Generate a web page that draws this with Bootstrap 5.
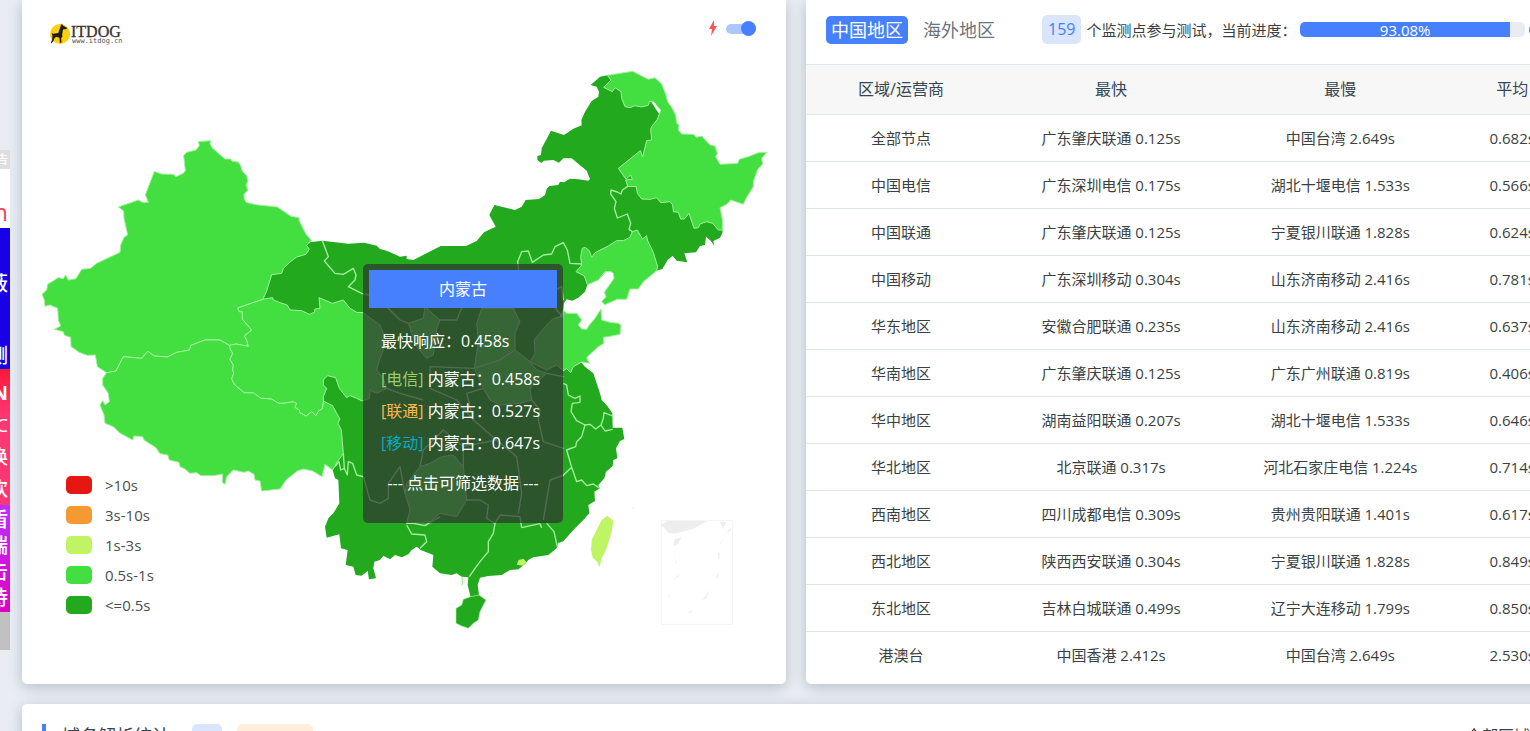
<!DOCTYPE html>
<html lang="zh-CN">
<head>
<meta charset="utf-8">
<meta name="viewport" content="width=device-width, initial-scale=1">
<title>ITDOG 网站测速</title>
<link href="https://cdn.jsdelivr.net/npm/bootstrap@5.3.0/dist/css/bootstrap.min.css" rel="stylesheet">
<style>
  :root { --brand: #4680ff; --fast: #23a91e; --good: #43df40; }
  html, body { overflow: hidden; }
  body { background: #e9edf3; color: #3a3f44; font: 15px/22px "Open Sans", "Noto Sans CJK SC", sans-serif; }

  /* side advertisement, cut by the window edge */
  .ad-strip { width: 10px; margin-top: 150px; color: #fff; }
  .ad-strip div { display: flex; flex-direction: column; align-items: flex-end; padding-right: 2px; white-space: nowrap; font-weight: 500; }
  .ad-label { height: 19px; background: #dedede; font-size: 12px; line-height: 19px; }
  .ad-domain { height: 59px; background: #fff; color: #f0485a; font-size: 24px; line-height: 86px; }
  .ad-blue { height: 141px; background: #1800e8; font-size: 20px; line-height: 72px; padding-top: 20px; }
  .ad-red { height: 136px; background: linear-gradient(#ff1838, #ff3875 35%); font-size: 19px; line-height: 32px; padding-top: 8px; }
  .ad-purple { height: 107px; background: linear-gradient(#bd2fff, #e000c0); font-size: 20px; line-height: 26px; padding-top: 2px; }
  .ad-end { height: 38px; background: #c1c1c1; }

  /* the panels run on past the right edge of the window */
  .board { margin: 0 -40px 0 12px; }
  .board .row { --bs-gutter-x: 20px; }
  .panel { background: #fff; border-radius: 5px; box-shadow: 0 3px 14px rgba(50, 70, 95, .28); }
  .panel-top { border-radius: 0 0 5px 5px; }

  .map-head { height: 60px; padding: 0 30px 4px 26px; }
  .map-head svg { display: block; }
  .speed-switch { gap: 8px; }
  .speed-switch .form-check-input { width: 30px; height: 15px; margin: 0; border: 0; background: none; position: relative; box-shadow: none; }
  .speed-switch .form-check-input::before { content: ""; position: absolute; inset: 3px 0 2px 0; border-radius: 5px; background: #acc6ff; }
  .speed-switch .form-check-input::after { content: ""; position: absolute; right: 0; top: 0; width: 15px; height: 15px; border-radius: 50%; background: var(--brand); }
  .map-area > svg { display: block; width: 100%; }
  .map-legend { position: absolute; left: 44px; bottom: 63px; color: #4d4d4d; line-height: 28px; }
  .map-legend li { display: flex; align-items: center; gap: 13px; padding-bottom: 2px; }
  .map-legend i { width: 26px; height: 18px; border-radius: 5px; }
  .map-tip { position: absolute; left: 341px; top: 204px; width: 200px; height: 259px; padding: 6px; border-radius: 5px; background: rgba(50, 50, 50, .7); color: #fff; font-size: 16px; line-height: 24px; white-space: nowrap; }
  .tip-title { background: var(--brand); line-height: 38px; text-align: center; }
  .tip-body { padding: 21px 12px 0; }
  .tip-body p { margin: 0 0 8px; }
  .tip-body p:first-child { margin-bottom: 14px; }
  .tip-body p:last-child { margin: 16px -8px 0; text-align: center; }

  .stat-head { height: 64px; padding: 0 20px 5px; white-space: nowrap; }
  .region-tab { border: 0; background: none; border-radius: 5px; padding: 0 5px; height: 28px; font-size: 18px; line-height: 28px; color: #6c757d; }
  .region-tab.active { background: var(--brand); color: #fff; margin-right: 10px; }
  .count-chip { background: #dae5ff; color: var(--brand); border-radius: 5px; font-size: 16px; line-height: 29px; padding: 0 6px; margin: 0 5px 0 42px; }
  .stat-head .progress { width: 225px; height: 15px; margin-left: 4px; border-radius: 5px; background: #e9edf3; font-size: 15px; flex: none; }
  .stat-head .progress-bar { background: var(--brand); }
  .next-chip { width: 40px; height: 14px; margin-left: 4px; border-radius: 7px; background: var(--brand); }

  .stat-table { table-layout: fixed; margin: 0 0 5px; text-align: center; color: inherit; --bs-table-color: #3a3f44; white-space: nowrap; }
  .stat-table > :not(caption) > * > * { padding: 0 1px 1px 0; border-color: #dfe6ec; vertical-align: middle; }
  .stat-table th { height: 50px; background: #f7f7f7; border-top: 1px solid #dfe6ec; color: #36454f; font-size: 16px; font-weight: 400; }
  .stat-table td { height: 47px; }
  .stat-table tbody tr:last-child td { border: 0; }

  .dns-panel { margin-top: 20px; height: 120px; padding: 20px; }
  .dns-title { border-left: 4px solid var(--brand); padding-left: 16px; margin: 0 22px 0 0; font-size: 18px; line-height: 24px; font-weight: 400; color: #36454f; }
  .chip { height: 24px; border-radius: 5px; }
  .chip-blue { width: 30px; background: #dae5ff; margin-right: 15px; }
  .chip-orange { width: 76px; background: #ffeedb; }
  .dns-more { margin-right: 20px; font-size: 16px; line-height: 24px; color: #3a3f44; text-decoration: none; }
</style>
</head>
<body>
<div class="d-flex align-items-start">
  <aside class="ad-strip overflow-hidden flex-shrink-0">
    <div class="ad-label">广告</div>
    <div class="ad-domain">.cn</div>
    <div class="ad-blue"><span>屏蔽</span><span>测</span></div>
    <div class="ad-red"><b>CDN</b><span>CC</span><span>换</span><span>欢</span></div>
    <div class="ad-purple"><span>盾</span><span>端</span><span>击</span><span>持</span></div>
    <div class="ad-end"></div>
  </aside>

  <main class="board flex-grow-1">
    <div class="row">
      <section class="col-6 d-flex">
        <div class="panel panel-top w-100">
          <div class="map-head d-flex justify-content-between align-items-center">
            <svg width="76" height="26" viewBox="0 0 76 26" overflow="visible" role="img" aria-label="ITDOG">
              <circle cx="12" cy="19" r="10" fill="#fcd00b"/>
              <path d="M13 10l1-1.500.8 2 4.500 2.600-1 1-3.300.3-.8 4.800.2 2.500-1.200 1.400.3 4.600h-1.600l-.5-5-3.500-1-1.500 1.800-1 2.500-2.200 2.500-.5-.5 1.500-3.500.2-3.500-.6-2.800 2 .6 4.500-.9z" fill="#231b18"/>
              <text x="23" y="22" font-family="Liberation Serif, serif" font-size="16" fill="#3b302c" stroke="#3b302c" stroke-width=".3">ITDOG</text>
              <text x="24" y="28" font-family="DejaVu Sans Mono, monospace" font-size="7" fill="#555">www.itdog.cn</text>
            </svg>
            <label class="speed-switch form-switch d-flex align-items-center p-0 m-0">
              <svg width="10" height="16" viewBox="0 0 10 16" aria-hidden="true"><path d="M6 0L1 9h3L3 16l6-10H6z" fill="#ff5252"/></svg>
              <input class="form-check-input" type="checkbox" role="switch" checked aria-label="极速模式">
            </label>
          </div>

          <div class="map-area position-relative">
            <svg viewBox="66 180 2292 1872" role="img" aria-label="中国地图" stroke-linejoin="round">
              <!-- mainland -->
              <path fill="#23a91e" d="M800 750L918 730 934 726 967 722 1045 731 1093 728 1130 737 1140 747 1160 752 1200 770 1220 767 1220 777 1240 780 1322 738 1398 738 1430 723 1452 697 1487 680 1468 645 1483 615 1545 630 1565 620 1577 600 1617 597 1635 585 1640 567 1648 558 1675 555 1680 545 1692 547 1710 536 1735 538 1765 542 1770 537 1760 512 1715 475 1690 475 1677 488 1660 480 1632 482 1624 489 1612 480 1612 468 1623 465 1625 445 1653 392 1692 405 1720 386 1745 376 1744 360 1755 335 1775 303 1795 290 1797 275 1790 260 1772 255 1800 230 1822 226 1950 300 2080 500 2150 650 2168 688 2167 700 2160 713 2140 723 2143 737 2132 722 2118 710 2115 735 2100 738 2088 757 2053 760 2062 787 2030 782 2018 767 2003 780 1987 807 1970 812 1850 780 1795 840 1762 855 1755 875 1735 893 1717 902 1700 898 1692 910 1690 930 1650 1000 1700 1090 1745 1088 1755 1100 1780 1120 1800 1180 1805 1200 1822 1218 1837 1240 1838 1283 1867 1283 1873 1317 1860 1323 1848 1345 1852 1375 1840 1380 1838 1398 1818 1415 1813 1435 1795 1455 1800 1465 1783 1475 1785 1503 1765 1515 1768 1540 1750 1560 1725 1585 1690 1624 1675 1629 1670 1645 1645 1665 1600 1672 1585 1680 1575 1692 1555 1708 1530 1710 1505 1725 1465 1728 1440 1733 1433 1755 1437 1785 1412 1792 1403 1755 1405 1732 1385 1730 1370 1720 1355 1725 1320 1720 1297 1700 1300 1665 1262 1650 1250 1640 1235 1650 1225 1663 1205 1672 1185 1665 1170 1678 1150 1667 1140 1680 1123 1685 1120 1705 1128 1735 1107 1738 1103 1713 1085 1727 1067 1725 1060 1700 1037 1695 1043 1650 1023 1645 1018 1603 980 1613 975 1580 985 1555 1000 1540 1018 1510 1015 1440 1005 1435 998 1410 970 1203 850 930 750 900z"/>
              <!-- Hainan -->
              <path fill="#23a91e" stroke="#a5f0a0" stroke-width="2" d="M1390 1798L1412 1790 1437 1785 1458 1800 1440 1835 1435 1860 1420 1870 1405 1885 1385 1878 1368 1870 1368 1825 1385 1815z"/>
              <!-- Taiwan, Hong Kong -->
              <path fill="#bff564" d="M1822 1547L1840 1562 1835 1595 1818 1650 1805 1675 1798 1702 1792 1685 1778 1673 1773 1650 1775 1620 1805 1560zM1550 1694L1556 1680 1570 1676 1579 1686 1571 1697z"/>
              <g fill="#43df40" stroke="#a5f0a0" stroke-width="3">
                <!-- Xinjiang -->
                <path d="M595 425L632 422 630 430 636 443 655 460 675 477 692 477 697 484 715 486 722 497 727 514 740 527 744 542 738 555 744 570 732 583 733 597 738 607 768 614 832 621 873 649 897 653 898 663 918 703 934 721 920 736 928 748 918 763 890 771 870 786 850 805 845 820 815 824 800 873 791 893 791 897 713 924 718 935 727 935 727 957 755 990 733 1008 740 1020 745 1039 708 1032 700 1036 688 1036 660 1020 615 1020 573 1036 568 1050 530 1057 502 1071 463 1068 443 1054 425 1075 370 1070 348 1113 320 1118 292 1100 286 1065 262 1066 237 1057 225 1048 213 1040 212 1012 193 1006 190 995 163 988 182 978 175 960 173 925 150 915 135 919 133 900 126 883 140 870 143 853 175 833 190 836 197 825 205 840 228 836 245 808 272 805 290 790 360 757 362 735 372 712 383 705 372 655 371 633 355 621 415 600 427 607 445 607 436 585 463 514 483 522 520 523 528 530 550 520 556 512 551 467 560 457 588 450 598 437z"/>
                <!-- Tibet -->
                <path d="M320 1118L348 1113 370 1070 425 1075 443 1054 463 1068 502 1071 530 1057 568 1050 573 1036 615 1020 660 1020 688 1036 690 1045 698 1060 690 1078 700 1095 698 1110 701 1120 695 1137 705 1155 733 1178 760 1178 782 1194 815 1197 835 1209 855 1209 880 1205 890 1210 885 1222 898 1230 900 1238 918 1248 935 1235 948 1247 955 1233 967 1226 970 1203 998 1217 1010 1240 1020 1257 1014 1270 1024 1290 1030 1360 1020 1375 1012 1385 998 1410 975 1393 966 1430 938 1413 910 1407 892 1413 858 1440 840 1467 785 1473 780 1443 765 1440 762 1423 745 1413 732 1417 700 1410 680 1430 675 1453 667 1447 668 1422 640 1427 603 1427 590 1418 570 1420 555 1407 540 1400 537 1387 508 1380 503 1365 480 1361 468 1343 432 1320 428 1310 402 1308 398 1320 358 1298 340 1280 315 1270 312 1245 300 1215 308 1202 315 1215 328 1205 325 1180 308 1155 308 1135z"/>
                <!-- Qinghai -->
                <path d="M791 897L818 893 820 900 840 908 862 915 870 930 905 932 928 943 943 937 945 927 960 925 957 893 997 910 1030 900 1050 925 1070 937 1090 938 1110 953 1140 975 1150 1000 1150 1050 1138 1080 1130 1110 1150 1135 1160 1165 1130 1180 1110 1170 1108 1195 1087 1203 1070 1195 1050 1187 1040 1193 1018 1165 1007 1133 983 1127 970 1140 970 1155 980 1165 970 1190 970 1203 967 1226 955 1233 948 1247 935 1235 918 1248 900 1238 898 1230 885 1222 890 1210 880 1205 855 1209 835 1209 815 1197 782 1194 760 1178 733 1178 705 1155 695 1137 701 1120 698 1110 700 1095 690 1078 698 1060 690 1045 688 1036 708 1032 745 1039 740 1020 733 1008 755 990 727 957 727 935 718 935 713 924z"/>
                <!-- Heilongjiang -->
                <path d="M1822 226L1898 214 1945 238 1965 233 1985 252 1998 285 2003 305 2015 322 2027 345 2030 370 2037 375 2035 390 2045 402 2080 403 2090 412 2105 408 2130 435 2145 438 2152 460 2147 470 2160 493 2213 490 2218 478 2245 470 2275 458 2300 457 2285 475 2288 492 2273 508 2260 545 2260 560 2240 592 2230 613 2192 600 2180 613 2160 623 2168 662 2167 690 2155 690 2138 670 2120 665 2100 672 2095 683 2082 685 2067 640 2053 657 2042 657 2035 637 2020 635 2018 615 2010 605 1982 608 1970 593 1950 598 1925 597 1912 580 1909 560 1883 559 1877 540 1897 538 1892 525 1878 538 1855 505 1921 452 1928 470 1940 422 1955 420 1952 388 1955 380 1972 358 1982 331 1960 304 1948 305 1945 316 1925 321 1905 317 1890 323 1875 320 1865 295 1863 275 1845 263 1837 275 1811 262 1833 240z"/>
                <!-- Liaoning -->
                <path d="M1897 695L1912 690 1927 717 1940 707 1942 720 1960 757 1973 800 1970 812 1930 845 1915 867 1890 867 1880 898 1852 898 1815 914 1805 905 1818 890 1813 877 1842 835 1840 820 1833 815 1815 815 1795 840 1762 854 1753 828 1728 815 1745 795 1742 770 1747 745 1755 742 1768 752 1775 772 1785 758 1825 738 1850 722 1870 722 1890 712z"/>
                <!-- Shandong -->
                <path d="M1690 930L1700 940 1730 940 1745 960 1735 975 1745 987 1760 988 1768 975 1785 955 1803 927 1805 960 1830 967 1855 970 1863 975 1860 1003 1825 1010 1810 1012 1812 1030 1795 1040 1768 1065 1760 1073 1768 1090 1745 1086 1720 1100 1712 1118 1700 1106 1690 1112 1670 1095 1640 1110 1590 1085 1605 1060 1603 1020 1640 975 1660 955 1688 950z"/>
                <!-- Shanxi, Henan, Ningxia, Guizhou -->
                <path d="M1445 925L1540 925 1560 965 1545 1000 1545 1050 1500 1080 1423 1105 1435 1025 1430 970z"/>
                <path d="M1423 1105L1500 1080 1545 1050 1590 1085 1610 1110 1640 1120 1590 1165 1595 1200 1560 1210 1500 1215 1470 1200 1450 1165z"/>
                <path d="M1225 970L1270 955 1275 920 1320 960 1310 985 1300 1065 1280 1075 1250 1040z"/>
                <path d="M1260 1400L1290 1390 1325 1370 1360 1365 1390 1400 1400 1500 1370 1550 1320 1540 1290 1565 1220 1570 1230 1530 1215 1480 1220 1450z"/>
              </g>
              <!-- province borders -->
              <path fill="none" stroke="#a5f0a0" stroke-width="4" d="M967 722L985 770 973 783 1005 820 1030 823 1060 805 1068 825 1065 840 1045 860 1085 880 1130 890 1200 960 1225 970M1883 559L1867 570 1863 582 1852 576 1833 570 1832 582 1848 605 1843 625 1852 654 1882 642 1892 670 1887 688 1897 695M1555 800L1553 785 1565 755 1585 753 1597 787 1630 765 1655 762 1665 740 1690 728 1702 750 1710 790 1745 792M1555 800L1560 850 1545 925M1690 900L1685 860 1645 880 1670 930 1690 953M1690 1150L1700 1155 1705 1185 1725 1195 1740 1188 1740 1207 1717 1210 1713 1235 1730 1262 1755 1275 1770 1273 1787 1287 1803 1275 1815 1293 1838 1288M1838 1248L1812 1238 1810 1255 1803 1275M1755 1275L1745 1310 1730 1325 1727 1340 1700 1350 1710 1385 1715 1402 1688 1427 1650 1440 1640 1500 1630 1560M1715 1402L1730 1445 1745 1440 1760 1457 1780 1452 1800 1465M1690 1345L1630 1325 1615 1260 1620 1230 1595 1200M1640 1120L1690 1130M1640 1570L1662 1595 1672 1640M1485 1570L1480 1600 1465 1625 1465 1655 1440 1685 1425 1705 1408 1730M1220 1575L1235 1602 1275 1605 1280 1625 1260 1645M1220 1570L1240 1570 1275 1577 1320 1550M1565 1583L1620 1571 1625 1583M1400 1500L1440 1500 1465 1515 1460 1555 1485 1570 1500 1545 1560 1550 1565 1583M1555 1540L1565 1480 1550 1370 1490 1320 1390 1340 1390 1400M1490 1320L1420 1260 1400 1180 1450 1165M1420 1260L1370 1200 1290 1165 1290 1100 1423 1105M1270 1200L1200 1180 1160 1165M1390 1340L1330 1290 1270 1350 1260 1400M1320 960L1370 960 1385 925M1030 1360L1033 1405 1022 1410 1017 1385 1005 1400M1033 1405L1042 1425 1045 1385 1058 1390 1070 1425 1090 1430 1110 1500 1140 1510 1165 1495 1165 1450 1200 1400 1215 1480M1387 1732L1387 1755"/>
              <!-- South China Sea inset -->
              <g fill="#eee">
                <path fill="none" stroke="#f3f3f3" stroke-width="3" d="M1984 1562H2197V1873H1984z"/>
                <path d="M1984 1574L2000 1563H2122L2080 1586 2032 1600H2006zM2160 1565H2178L2170 1587zM2024 1618L2044 1612 2035 1632 2020 1638zM2178 1602L2192 1583 2192 1590zM2157 1636L2170 1617 2165 1628zM2153 1658H2159V1677H2155zM2022 1670L2031 1690 2028 1692zM2020 1742L2038 1721 2034 1730zM2146 1735L2160 1713 2152 1733zM2003 1776L2011 1795 2007 1793zM2108 1800L2131 1768 2118 1796zM2057 1842L2080 1830 2072 1838zM1895 1526L1902 1518 1903 1525z"/>
              </g>
            </svg>

            <ul class="map-legend list-unstyled m-0">
              <li><i style="background:#e61610"></i>&gt;10s</li>
              <li><i style="background:#f79933"></i>3s-10s</li>
              <li><i style="background:#bff564"></i>1s-3s</li>
              <li><i style="background:#43df40"></i>0.5s-1s</li>
              <li><i style="background:#23a91e"></i>&lt;=0.5s</li>
            </ul>

            <div class="map-tip">
              <div class="tip-title">内蒙古</div>
              <div class="tip-body">
                <p>最快响应：0.458s</p>
                <p><span style="color:#9ccc65">[电信]</span> 内蒙古：0.458s</p>
                <p><span style="color:#ffb64d">[联通]</span> 内蒙古：0.527s</p>
                <p><span style="color:#00acc1">[移动]</span> 内蒙古：0.647s</p>
                <p>--- 点击可筛选数据 ---</p>
              </div>
            </div>
          </div>
        </div>
      </section>

      <section class="col-6 d-flex">
        <div class="panel panel-top w-100">
          <div class="stat-head d-flex align-items-center">
            <button type="button" class="region-tab active">中国地区</button>
            <button type="button" class="region-tab">海外地区</button>
            <span class="count-chip">159</span>
            <span>个监测点参与测试，当前进度：</span>
            <div class="progress" role="progressbar" aria-label="当前进度" aria-valuenow="93.08" aria-valuemin="0" aria-valuemax="100">
              <div class="progress-bar" style="width:93.08%">93.08%</div>
            </div>
            <span class="next-chip"></span>
          </div>
          <table class="table stat-table">
            <colgroup><col style="width:25%"><col style="width:30%"><col style="width:30%"><col style="width:15%"></colgroup>
            <thead><tr><th scope="col">区域/运营商</th><th scope="col">最快</th><th scope="col">最慢</th><th scope="col">平均</th></tr></thead>
            <tbody>
              <tr><td>全部节点</td><td>广东肇庆联通 0.125s</td><td>中国台湾 2.649s</td><td>0.682s</td></tr>
              <tr><td>中国电信</td><td>广东深圳电信 0.175s</td><td>湖北十堰电信 1.533s</td><td>0.566s</td></tr>
              <tr><td>中国联通</td><td>广东肇庆联通 0.125s</td><td>宁夏银川联通 1.828s</td><td>0.624s</td></tr>
              <tr><td>中国移动</td><td>广东深圳移动 0.304s</td><td>山东济南移动 2.416s</td><td>0.781s</td></tr>
              <tr><td>华东地区</td><td>安徽合肥联通 0.235s</td><td>山东济南移动 2.416s</td><td>0.637s</td></tr>
              <tr><td>华南地区</td><td>广东肇庆联通 0.125s</td><td>广东广州联通 0.819s</td><td>0.406s</td></tr>
              <tr><td>华中地区</td><td>湖南益阳联通 0.207s</td><td>湖北十堰电信 1.533s</td><td>0.646s</td></tr>
              <tr><td>华北地区</td><td>北京联通 0.317s</td><td>河北石家庄电信 1.224s</td><td>0.714s</td></tr>
              <tr><td>西南地区</td><td>四川成都电信 0.309s</td><td>贵州贵阳联通 1.401s</td><td>0.617s</td></tr>
              <tr><td>西北地区</td><td>陕西西安联通 0.304s</td><td>宁夏银川联通 1.828s</td><td>0.849s</td></tr>
              <tr><td>东北地区</td><td>吉林白城联通 0.499s</td><td>辽宁大连移动 1.799s</td><td>0.850s</td></tr>
              <tr><td>港澳台</td><td>中国香港 2.412s</td><td>中国台湾 2.649s</td><td>2.530s</td></tr>
            </tbody>
          </table>
        </div>
      </section>
    </div>

    <div class="row">
      <section class="col-12">
        <div class="panel dns-panel d-flex align-items-start">
          <h2 class="dns-title">域名解析统计</h2>
          <span class="chip chip-blue"></span>
          <span class="chip chip-orange"></span>
          <a href="#" class="dns-more ms-auto">全部区域</a>
        </div>
      </section>
    </div>
  </main>
</div>
<script src="https://cdn.jsdelivr.net/npm/bootstrap@5.3.0/dist/js/bootstrap.bundle.min.js"></script>
</body>
</html>
